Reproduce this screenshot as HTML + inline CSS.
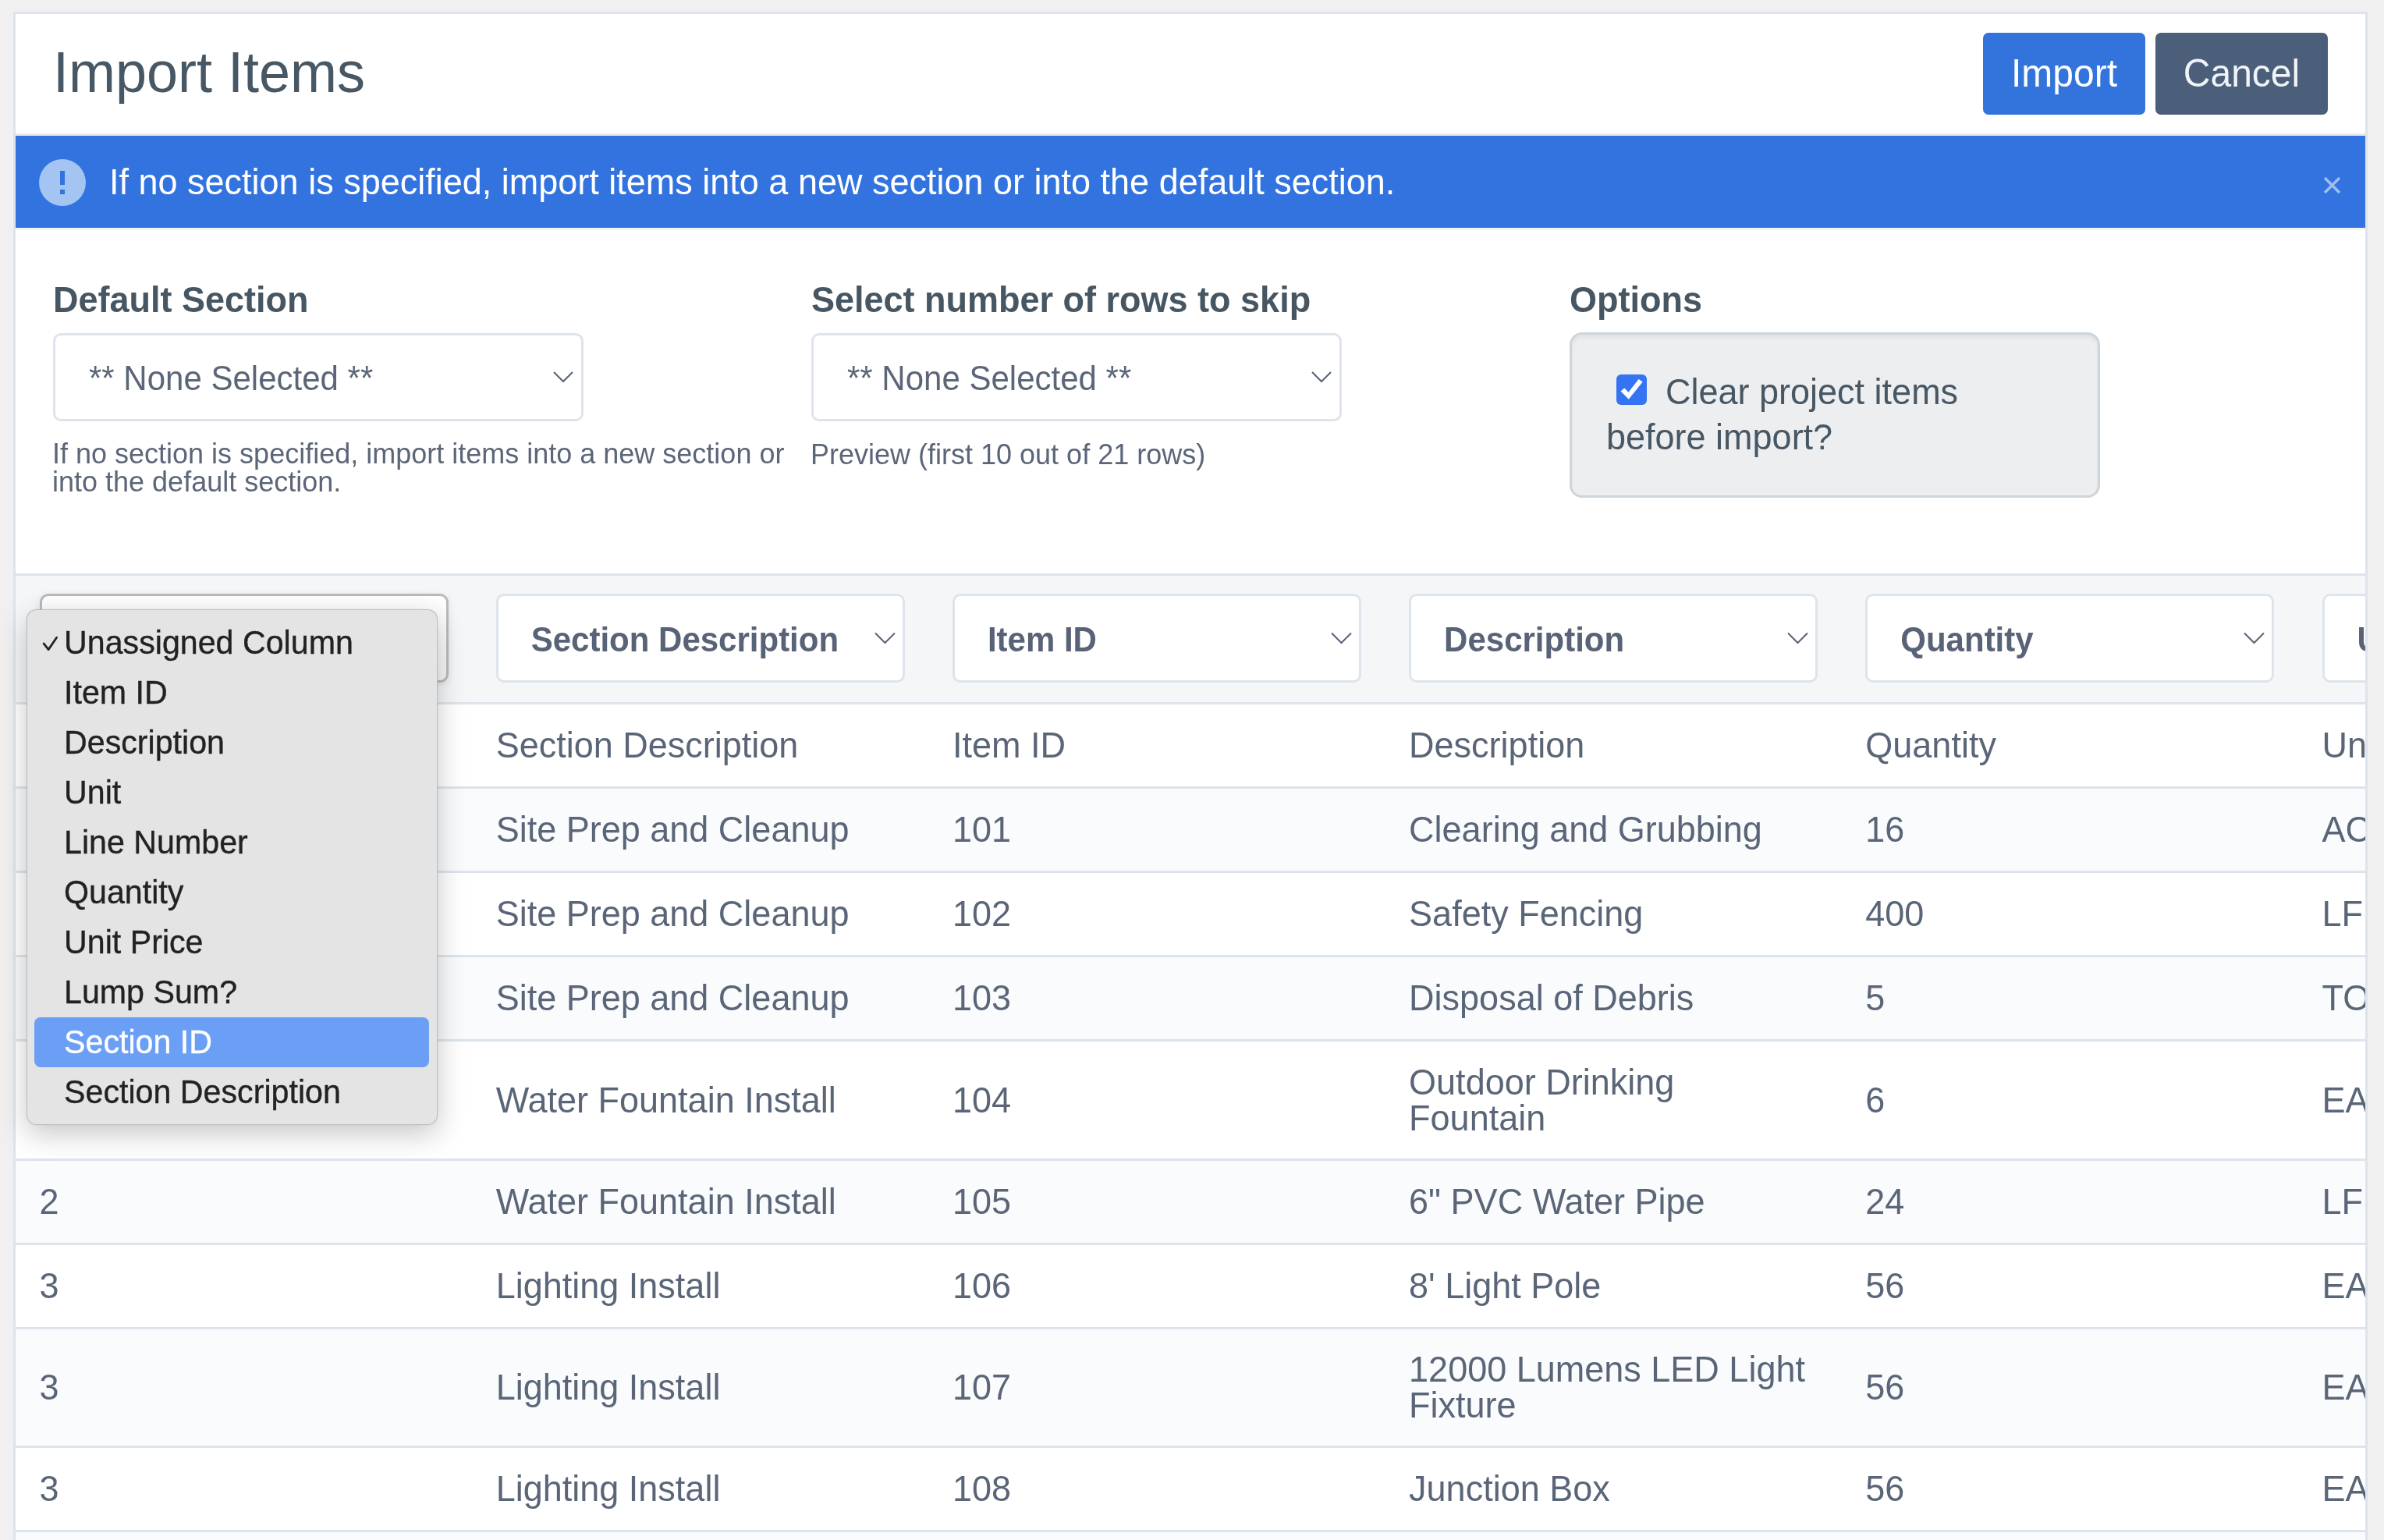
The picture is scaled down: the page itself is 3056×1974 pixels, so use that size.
<!DOCTYPE html>
<html><head><meta charset="utf-8">
<style>
*{box-sizing:border-box;margin:0;padding:0}
html,body{width:3056px;height:1974px;overflow:hidden;background:#f0f0f0;font-family:"Liberation Sans",sans-serif}
.abs{position:absolute}
.t{position:absolute;white-space:nowrap}
#card{position:absolute;left:17px;top:15px;width:3018px;height:2000px;background:#fff;border:3px solid #dde4eb;overflow:hidden}
</style></head><body>
<div id="root" style="position:absolute;left:0;top:0;width:3056px;height:1974px;overflow:hidden;will-change:transform">
<div id="card"></div>

<!-- header -->
<div class="t" style="left:68px;top:57px;font-size:72px;line-height:72px;color:#475764;transform:scaleY(1.04);transform-origin:0 60.95px">Import Items</div>
<div class="abs" style="left:2542px;top:42px;width:208px;height:105px;border-radius:7px;background:#3273dc;color:#fff;font-size:48px;line-height:105px;text-align:center"><span style="display:inline-block;transform:scaleY(1.04);transform-origin:0 69.1px;height:105px">Import</span></div>
<div class="abs" style="left:2763px;top:42px;width:221px;height:105px;border-radius:7px;background:#4b5f7b;color:#f0f4f8;font-size:48px;line-height:105px;text-align:center"><span style="display:inline-block;transform:scaleY(1.04);transform-origin:0 69.1px;height:105px">Cancel</span></div>

<!-- banner -->
<div class="abs" style="left:20px;top:171px;width:3012px;height:3px;background:#e6ebef"></div>
<div class="abs" style="left:20px;top:174px;width:3012px;height:118px;background:#3373df"></div>
<div class="abs" style="left:20px;top:292px;width:3012px;height:3px;background:#f4f4f4"></div>
<div class="abs" style="left:50px;top:204px;width:60px;height:60px;border-radius:50%;background:#a4c4f1"></div>
<div class="abs" style="left:77px;top:219px;width:6px;height:18px;background:#3373df"></div>
<div class="abs" style="left:77px;top:243px;width:6px;height:6px;background:#3373df"></div>
<div class="t" style="left:140px;top:211px;font-size:45px;line-height:45px;color:#fff;transform:scaleY(1.04);transform-origin:0 38.09px">If no section is specified, import items into a new section or into the default section.</div>
<svg class="abs" style="left:2978px;top:226px" width="23" height="23" viewBox="0 0 23 23"><path d="M2 2L21 21M21 2L2 21" stroke="#a0bdf0" stroke-width="3.5"/></svg>

<!-- form -->
<div class="t" style="left:68px;top:362px;font-size:45px;line-height:45px;font-weight:bold;color:#465662;transform:scaleY(1.04);transform-origin:0 38.09px">Default Section</div>
<div class="t" style="left:1040px;top:362px;font-size:45px;line-height:45px;font-weight:bold;color:#465662;transform:scaleY(1.04);transform-origin:0 38.09px">Select number of rows to skip</div>
<div class="t" style="left:2012px;top:362px;font-size:45px;line-height:45px;font-weight:bold;color:#465662;transform:scaleY(1.04);transform-origin:0 38.09px">Options</div>

<div class="abs" style="left:68px;top:427px;width:680px;height:113px;border:3px solid #dde4eb;border-radius:10px;background:#fff"></div>
<div class="t" style="left:114px;top:465px;font-size:42px;line-height:42px;color:#5b6678;transform:scaleY(1.04);transform-origin:0 35.55px">** None Selected **</div>
<svg class="abs" style="left:708px;top:474px" width="28" height="18" viewBox="0 0 28 18"><path d="M2 3L14 15L26 3" fill="none" stroke="#5a6377" stroke-width="2.1"/></svg>

<div class="abs" style="left:1040px;top:427px;width:680px;height:113px;border:3px solid #dde4eb;border-radius:10px;background:#fff"></div>
<div class="t" style="left:1086px;top:465px;font-size:42px;line-height:42px;color:#5b6678;transform:scaleY(1.04);transform-origin:0 35.55px">** None Selected **</div>
<svg class="abs" style="left:1680px;top:474px" width="28" height="18" viewBox="0 0 28 18"><path d="M2 3L14 15L26 3" fill="none" stroke="#5a6377" stroke-width="2.1"/></svg>

<div class="t" style="left:67px;top:564.7px;font-size:36px;line-height:34.6px;color:#5b6678;transform:scaleY(1.04);transform-origin:0 29.77px">If no section is specified, import items into a new section or<br>into the default section.</div>
<div class="t" style="left:1039px;top:565px;font-size:36px;line-height:36px;color:#5b6678;transform:scaleY(1.04);transform-origin:0 30.47px">Preview (first 10 out of 21 rows)</div>

<div class="abs" style="left:2012px;top:426px;width:680px;height:212px;border:3px solid #ced5da;border-radius:16px;background:#edeef0;box-shadow:inset 0 4px 5px rgba(0,0,0,0.055)"></div>
<div class="abs" style="left:2072px;top:480px;width:39px;height:39px;border-radius:6px;background:#3474f4"></div>
<svg class="abs" style="left:2050px;top:460px" width="80" height="80" viewBox="0 0 80 80"><path d="M27.5 41.6L32.2 37.5L37.5 42.7L50.6 26L55.7 29.5L37.8 51.7Z" fill="#fff"/></svg>
<div class="t" style="left:2135px;top:480px;font-size:45px;line-height:45px;color:#475764;transform:scaleY(1.04);transform-origin:0 38.09px">Clear project items</div>
<div class="t" style="left:2059px;top:538px;font-size:45px;line-height:45px;color:#475764;transform:scaleY(1.04);transform-origin:0 38.09px">before import?</div>

<!-- table -->
<div class="abs" style="left:20px;top:735px;width:3012px;height:3px;background:#dde4eb"></div>
<div class="abs" style="left:20px;top:738px;width:3012px;height:162px;background:#f5f6f8"></div>
<div class="abs" style="left:20px;top:900px;width:3012px;height:3px;background:#dde4eb"></div>
<div class="abs" style="left:20px;top:903.0px;width:3012px;height:105px;background:#fff"></div>
<div class="abs" style="left:20px;top:1008.0px;width:3012px;height:3px;background:#dde4eb"></div>
<div class="t" style="left:50.5px;top:933.4px;font-size:45px;line-height:45px;color:#5a6678;transform:scaleY(1.04);transform-origin:0 38.09px">Section ID</div>
<div class="t" style="left:635.7px;top:933.4px;font-size:45px;line-height:45px;color:#5a6678;transform:scaleY(1.04);transform-origin:0 38.09px">Section Description</div>
<div class="t" style="left:1220.9px;top:933.4px;font-size:45px;line-height:45px;color:#5a6678;transform:scaleY(1.04);transform-origin:0 38.09px">Item ID</div>
<div class="t" style="left:1806.1px;top:933.4px;font-size:45px;line-height:45px;color:#5a6678;transform:scaleY(1.04);transform-origin:0 38.09px">Description</div>
<div class="t" style="left:2391.3px;top:933.4px;font-size:45px;line-height:45px;color:#5a6678;transform:scaleY(1.04);transform-origin:0 38.09px">Quantity</div>
<div class="t" style="left:2976.5px;top:933.4px;font-size:45px;line-height:45px;color:#5a6678;transform:scaleY(1.04);transform-origin:0 38.09px">Unit</div>
<div class="abs" style="left:20px;top:1011.0px;width:3012px;height:105px;background:#fafbfd"></div>
<div class="abs" style="left:20px;top:1116.0px;width:3012px;height:3px;background:#dde4eb"></div>
<div class="t" style="left:50.5px;top:1041.4px;font-size:45px;line-height:45px;color:#5a6678;transform:scaleY(1.04);transform-origin:0 38.09px">1</div>
<div class="t" style="left:635.7px;top:1041.4px;font-size:45px;line-height:45px;color:#5a6678;transform:scaleY(1.04);transform-origin:0 38.09px">Site Prep and Cleanup</div>
<div class="t" style="left:1220.9px;top:1041.4px;font-size:45px;line-height:45px;color:#5a6678;transform:scaleY(1.04);transform-origin:0 38.09px">101</div>
<div class="t" style="left:1806.1px;top:1041.4px;font-size:45px;line-height:45px;color:#5a6678;transform:scaleY(1.04);transform-origin:0 38.09px">Clearing and Grubbing</div>
<div class="t" style="left:2391.3px;top:1041.4px;font-size:45px;line-height:45px;color:#5a6678;transform:scaleY(1.04);transform-origin:0 38.09px">16</div>
<div class="t" style="left:2976.5px;top:1041.4px;font-size:45px;line-height:45px;color:#5a6678;transform:scaleY(1.04);transform-origin:0 38.09px">AC</div>
<div class="abs" style="left:20px;top:1119.0px;width:3012px;height:105px;background:#fff"></div>
<div class="abs" style="left:20px;top:1224.0px;width:3012px;height:3px;background:#dde4eb"></div>
<div class="t" style="left:50.5px;top:1149.4px;font-size:45px;line-height:45px;color:#5a6678;transform:scaleY(1.04);transform-origin:0 38.09px">1</div>
<div class="t" style="left:635.7px;top:1149.4px;font-size:45px;line-height:45px;color:#5a6678;transform:scaleY(1.04);transform-origin:0 38.09px">Site Prep and Cleanup</div>
<div class="t" style="left:1220.9px;top:1149.4px;font-size:45px;line-height:45px;color:#5a6678;transform:scaleY(1.04);transform-origin:0 38.09px">102</div>
<div class="t" style="left:1806.1px;top:1149.4px;font-size:45px;line-height:45px;color:#5a6678;transform:scaleY(1.04);transform-origin:0 38.09px">Safety Fencing</div>
<div class="t" style="left:2391.3px;top:1149.4px;font-size:45px;line-height:45px;color:#5a6678;transform:scaleY(1.04);transform-origin:0 38.09px">400</div>
<div class="t" style="left:2976.5px;top:1149.4px;font-size:45px;line-height:45px;color:#5a6678;transform:scaleY(1.04);transform-origin:0 38.09px">LF</div>
<div class="abs" style="left:20px;top:1227.0px;width:3012px;height:105px;background:#fafbfd"></div>
<div class="abs" style="left:20px;top:1332.0px;width:3012px;height:3px;background:#dde4eb"></div>
<div class="t" style="left:50.5px;top:1257.4px;font-size:45px;line-height:45px;color:#5a6678;transform:scaleY(1.04);transform-origin:0 38.09px">1</div>
<div class="t" style="left:635.7px;top:1257.4px;font-size:45px;line-height:45px;color:#5a6678;transform:scaleY(1.04);transform-origin:0 38.09px">Site Prep and Cleanup</div>
<div class="t" style="left:1220.9px;top:1257.4px;font-size:45px;line-height:45px;color:#5a6678;transform:scaleY(1.04);transform-origin:0 38.09px">103</div>
<div class="t" style="left:1806.1px;top:1257.4px;font-size:45px;line-height:45px;color:#5a6678;transform:scaleY(1.04);transform-origin:0 38.09px">Disposal of Debris</div>
<div class="t" style="left:2391.3px;top:1257.4px;font-size:45px;line-height:45px;color:#5a6678;transform:scaleY(1.04);transform-origin:0 38.09px">5</div>
<div class="t" style="left:2976.5px;top:1257.4px;font-size:45px;line-height:45px;color:#5a6678;transform:scaleY(1.04);transform-origin:0 38.09px">TON</div>
<div class="abs" style="left:20px;top:1335.0px;width:3012px;height:149.5px;background:#fff"></div>
<div class="abs" style="left:20px;top:1484.5px;width:3012px;height:3px;background:#dde4eb"></div>
<div class="t" style="left:50.5px;top:1387.7px;font-size:45px;line-height:45px;color:#5a6678;transform:scaleY(1.04);transform-origin:0 38.09px">2</div>
<div class="t" style="left:635.7px;top:1387.7px;font-size:45px;line-height:45px;color:#5a6678;transform:scaleY(1.04);transform-origin:0 38.09px">Water Fountain Install</div>
<div class="t" style="left:1220.9px;top:1387.7px;font-size:45px;line-height:45px;color:#5a6678;transform:scaleY(1.04);transform-origin:0 38.09px">104</div>
<div class="t" style="left:1806.1px;top:1365.68px;font-size:45px;line-height:43.75px;color:#5a6678;transform:scaleY(1.04);transform-origin:0 37.47px">Outdoor Drinking<br>Fountain</div>
<div class="t" style="left:2391.3px;top:1387.7px;font-size:45px;line-height:45px;color:#5a6678;transform:scaleY(1.04);transform-origin:0 38.09px">6</div>
<div class="t" style="left:2976.5px;top:1387.7px;font-size:45px;line-height:45px;color:#5a6678;transform:scaleY(1.04);transform-origin:0 38.09px">EA</div>
<div class="abs" style="left:20px;top:1487.5px;width:3012px;height:105px;background:#fafbfd"></div>
<div class="abs" style="left:20px;top:1592.5px;width:3012px;height:3px;background:#dde4eb"></div>
<div class="t" style="left:50.5px;top:1517.9px;font-size:45px;line-height:45px;color:#5a6678;transform:scaleY(1.04);transform-origin:0 38.09px">2</div>
<div class="t" style="left:635.7px;top:1517.9px;font-size:45px;line-height:45px;color:#5a6678;transform:scaleY(1.04);transform-origin:0 38.09px">Water Fountain Install</div>
<div class="t" style="left:1220.9px;top:1517.9px;font-size:45px;line-height:45px;color:#5a6678;transform:scaleY(1.04);transform-origin:0 38.09px">105</div>
<div class="t" style="left:1806.1px;top:1517.9px;font-size:45px;line-height:45px;color:#5a6678;transform:scaleY(1.04);transform-origin:0 38.09px">6" PVC Water Pipe</div>
<div class="t" style="left:2391.3px;top:1517.9px;font-size:45px;line-height:45px;color:#5a6678;transform:scaleY(1.04);transform-origin:0 38.09px">24</div>
<div class="t" style="left:2976.5px;top:1517.9px;font-size:45px;line-height:45px;color:#5a6678;transform:scaleY(1.04);transform-origin:0 38.09px">LF</div>
<div class="abs" style="left:20px;top:1595.5px;width:3012px;height:105px;background:#fff"></div>
<div class="abs" style="left:20px;top:1700.5px;width:3012px;height:3px;background:#dde4eb"></div>
<div class="t" style="left:50.5px;top:1625.9px;font-size:45px;line-height:45px;color:#5a6678;transform:scaleY(1.04);transform-origin:0 38.09px">3</div>
<div class="t" style="left:635.7px;top:1625.9px;font-size:45px;line-height:45px;color:#5a6678;transform:scaleY(1.04);transform-origin:0 38.09px">Lighting Install</div>
<div class="t" style="left:1220.9px;top:1625.9px;font-size:45px;line-height:45px;color:#5a6678;transform:scaleY(1.04);transform-origin:0 38.09px">106</div>
<div class="t" style="left:1806.1px;top:1625.9px;font-size:45px;line-height:45px;color:#5a6678;transform:scaleY(1.04);transform-origin:0 38.09px">8' Light Pole</div>
<div class="t" style="left:2391.3px;top:1625.9px;font-size:45px;line-height:45px;color:#5a6678;transform:scaleY(1.04);transform-origin:0 38.09px">56</div>
<div class="t" style="left:2976.5px;top:1625.9px;font-size:45px;line-height:45px;color:#5a6678;transform:scaleY(1.04);transform-origin:0 38.09px">EA</div>
<div class="abs" style="left:20px;top:1703.5px;width:3012px;height:149.5px;background:#fafbfd"></div>
<div class="abs" style="left:20px;top:1853.0px;width:3012px;height:3px;background:#dde4eb"></div>
<div class="t" style="left:50.5px;top:1756.2px;font-size:45px;line-height:45px;color:#5a6678;transform:scaleY(1.04);transform-origin:0 38.09px">3</div>
<div class="t" style="left:635.7px;top:1756.2px;font-size:45px;line-height:45px;color:#5a6678;transform:scaleY(1.04);transform-origin:0 38.09px">Lighting Install</div>
<div class="t" style="left:1220.9px;top:1756.2px;font-size:45px;line-height:45px;color:#5a6678;transform:scaleY(1.04);transform-origin:0 38.09px">107</div>
<div class="t" style="left:1806.1px;top:1734.18px;font-size:45px;line-height:43.75px;color:#5a6678;transform:scaleY(1.04);transform-origin:0 37.47px">12000 Lumens LED Light<br>Fixture</div>
<div class="t" style="left:2391.3px;top:1756.2px;font-size:45px;line-height:45px;color:#5a6678;transform:scaleY(1.04);transform-origin:0 38.09px">56</div>
<div class="t" style="left:2976.5px;top:1756.2px;font-size:45px;line-height:45px;color:#5a6678;transform:scaleY(1.04);transform-origin:0 38.09px">EA</div>
<div class="abs" style="left:20px;top:1856.0px;width:3012px;height:105px;background:#fff"></div>
<div class="abs" style="left:20px;top:1961.0px;width:3012px;height:3px;background:#dde4eb"></div>
<div class="t" style="left:50.5px;top:1886.4px;font-size:45px;line-height:45px;color:#5a6678;transform:scaleY(1.04);transform-origin:0 38.09px">3</div>
<div class="t" style="left:635.7px;top:1886.4px;font-size:45px;line-height:45px;color:#5a6678;transform:scaleY(1.04);transform-origin:0 38.09px">Lighting Install</div>
<div class="t" style="left:1220.9px;top:1886.4px;font-size:45px;line-height:45px;color:#5a6678;transform:scaleY(1.04);transform-origin:0 38.09px">108</div>
<div class="t" style="left:1806.1px;top:1886.4px;font-size:45px;line-height:45px;color:#5a6678;transform:scaleY(1.04);transform-origin:0 38.09px">Junction Box</div>
<div class="t" style="left:2391.3px;top:1886.4px;font-size:45px;line-height:45px;color:#5a6678;transform:scaleY(1.04);transform-origin:0 38.09px">56</div>
<div class="t" style="left:2976.5px;top:1886.4px;font-size:45px;line-height:45px;color:#5a6678;transform:scaleY(1.04);transform-origin:0 38.09px">EA</div>
<div class="abs" style="left:20px;top:1964.0px;width:3012px;height:105px;background:#fafbfd"></div>
<div class="abs" style="left:20px;top:2069.0px;width:3012px;height:3px;background:#dde4eb"></div>
<div class="t" style="left:50.5px;top:1994.4px;font-size:45px;line-height:45px;color:#5a6678;transform:scaleY(1.04);transform-origin:0 38.09px">4</div>
<div class="t" style="left:635.7px;top:1994.4px;font-size:45px;line-height:45px;color:#5a6678;transform:scaleY(1.04);transform-origin:0 38.09px">Lighting Install</div>
<div class="t" style="left:1220.9px;top:1994.4px;font-size:45px;line-height:45px;color:#5a6678;transform:scaleY(1.04);transform-origin:0 38.09px">109</div>
<div class="t" style="left:1806.1px;top:1994.4px;font-size:45px;line-height:45px;color:#5a6678;transform:scaleY(1.04);transform-origin:0 38.09px">Conduit</div>
<div class="t" style="left:2391.3px;top:1994.4px;font-size:45px;line-height:45px;color:#5a6678;transform:scaleY(1.04);transform-origin:0 38.09px">100</div>
<div class="t" style="left:2976.5px;top:1994.4px;font-size:45px;line-height:45px;color:#5a6678;transform:scaleY(1.04);transform-origin:0 38.09px">LF</div>
<div class="abs" style="left:50.5px;top:761px;width:524px;height:114px;border:3px solid #bababa;border-radius:11px;background:linear-gradient(#fefefe,#f5f5f5);box-shadow:0 2px 10px rgba(0,0,0,0.09)"></div>
<div class="abs" style="left:635.7px;top:761px;width:524px;height:114px;border:3px solid #dde4eb;border-radius:10px;background:#fff"></div>
<div class="t" style="left:680.7px;top:800px;font-size:42px;line-height:42px;font-weight:bold;color:#596377;transform:scaleY(1.04);transform-origin:0 35.55px">Section Description</div>
<svg class="abs" style="left:1119.7px;top:809px" width="29" height="18" viewBox="0 0 29 18"><path d="M2 2.5L14.5 15L27 2.5" fill="none" stroke="#5a6377" stroke-width="2.1"/></svg>
<div class="abs" style="left:1220.9px;top:761px;width:524px;height:114px;border:3px solid #dde4eb;border-radius:10px;background:#fff"></div>
<div class="t" style="left:1265.9px;top:800px;font-size:42px;line-height:42px;font-weight:bold;color:#596377;transform:scaleY(1.04);transform-origin:0 35.55px">Item ID</div>
<svg class="abs" style="left:1704.9px;top:809px" width="29" height="18" viewBox="0 0 29 18"><path d="M2 2.5L14.5 15L27 2.5" fill="none" stroke="#5a6377" stroke-width="2.1"/></svg>
<div class="abs" style="left:1806.1000000000001px;top:761px;width:524px;height:114px;border:3px solid #dde4eb;border-radius:10px;background:#fff"></div>
<div class="t" style="left:1851.1px;top:800px;font-size:42px;line-height:42px;font-weight:bold;color:#596377;transform:scaleY(1.04);transform-origin:0 35.55px">Description</div>
<svg class="abs" style="left:2290.1px;top:809px" width="29" height="18" viewBox="0 0 29 18"><path d="M2 2.5L14.5 15L27 2.5" fill="none" stroke="#5a6377" stroke-width="2.1"/></svg>
<div class="abs" style="left:2391.3px;top:761px;width:524px;height:114px;border:3px solid #dde4eb;border-radius:10px;background:#fff"></div>
<div class="t" style="left:2436.3px;top:800px;font-size:42px;line-height:42px;font-weight:bold;color:#596377;transform:scaleY(1.04);transform-origin:0 35.55px">Quantity</div>
<svg class="abs" style="left:2875.3px;top:809px" width="29" height="18" viewBox="0 0 29 18"><path d="M2 2.5L14.5 15L27 2.5" fill="none" stroke="#5a6377" stroke-width="2.1"/></svg>
<div class="abs" style="left:2976.5px;top:761px;width:524px;height:114px;border:3px solid #dde4eb;border-radius:10px;background:#fff"></div>
<div class="t" style="left:3021.5px;top:800px;font-size:42px;line-height:42px;font-weight:bold;color:#596377;transform:scaleY(1.04);transform-origin:0 35.55px">Unit</div>
<svg class="abs" style="left:3460.5px;top:809px" width="29" height="18" viewBox="0 0 29 18"><path d="M2 2.5L14.5 15L27 2.5" fill="none" stroke="#5a6377" stroke-width="2.1"/></svg>
<div class="abs" style="left:3032px;top:700px;width:3px;height:1300px;background:#dde4eb"></div>
<div class="abs" style="left:3035px;top:0px;width:21px;height:1974px;background:#f0f0f0"></div>
<div class="abs" style="left:34px;top:781px;width:527px;height:661px;border-radius:13px;background:#e3e4e3;border:1px solid rgba(0,0,0,0.16);box-shadow:0 12px 36px rgba(0,0,0,0.22),0 0 2px rgba(0,0,0,0.1)"></div>
<div class="abs" style="left:44px;top:1304px;width:506px;height:63.5px;border-radius:8px;background:#6b9ff5"></div>
<div class="t" style="left:82px;top:803.6px;font-size:41.2px;line-height:41.2px;color:#222;-webkit-text-stroke:0.35px #222;transform:scaleY(1.025);transform-origin:0 34.88px">Unassigned Column</div>
<div class="t" style="left:82px;top:867.6px;font-size:41.2px;line-height:41.2px;color:#222;-webkit-text-stroke:0.35px #222;transform:scaleY(1.025);transform-origin:0 34.88px">Item ID</div>
<div class="t" style="left:82px;top:931.6px;font-size:41.2px;line-height:41.2px;color:#222;-webkit-text-stroke:0.35px #222;transform:scaleY(1.025);transform-origin:0 34.88px">Description</div>
<div class="t" style="left:82px;top:995.6px;font-size:41.2px;line-height:41.2px;color:#222;-webkit-text-stroke:0.35px #222;transform:scaleY(1.025);transform-origin:0 34.88px">Unit</div>
<div class="t" style="left:82px;top:1059.6px;font-size:41.2px;line-height:41.2px;color:#222;-webkit-text-stroke:0.35px #222;transform:scaleY(1.025);transform-origin:0 34.88px">Line Number</div>
<div class="t" style="left:82px;top:1123.6px;font-size:41.2px;line-height:41.2px;color:#222;-webkit-text-stroke:0.35px #222;transform:scaleY(1.025);transform-origin:0 34.88px">Quantity</div>
<div class="t" style="left:82px;top:1187.6px;font-size:41.2px;line-height:41.2px;color:#222;-webkit-text-stroke:0.35px #222;transform:scaleY(1.025);transform-origin:0 34.88px">Unit Price</div>
<div class="t" style="left:82px;top:1251.6px;font-size:41.2px;line-height:41.2px;color:#222;-webkit-text-stroke:0.35px #222;transform:scaleY(1.025);transform-origin:0 34.88px">Lump Sum?</div>
<div class="t" style="left:82px;top:1315.6px;font-size:41.2px;line-height:41.2px;color:#fff;-webkit-text-stroke:0.35px #fff;transform:scaleY(1.025);transform-origin:0 34.88px">Section ID</div>
<div class="t" style="left:82px;top:1379.6px;font-size:41.2px;line-height:41.2px;color:#222;-webkit-text-stroke:0.35px #222;transform:scaleY(1.025);transform-origin:0 34.88px">Section Description</div>
<svg class="abs" style="left:50px;top:810px" width="30" height="30" viewBox="0 0 30 30"><path d="M6.1 14.9L12.1 22.6L22.6 7.2" fill="none" stroke="#232323" stroke-width="2.8" stroke-linecap="round" stroke-linejoin="round"/></svg>
</div>
</body></html>
